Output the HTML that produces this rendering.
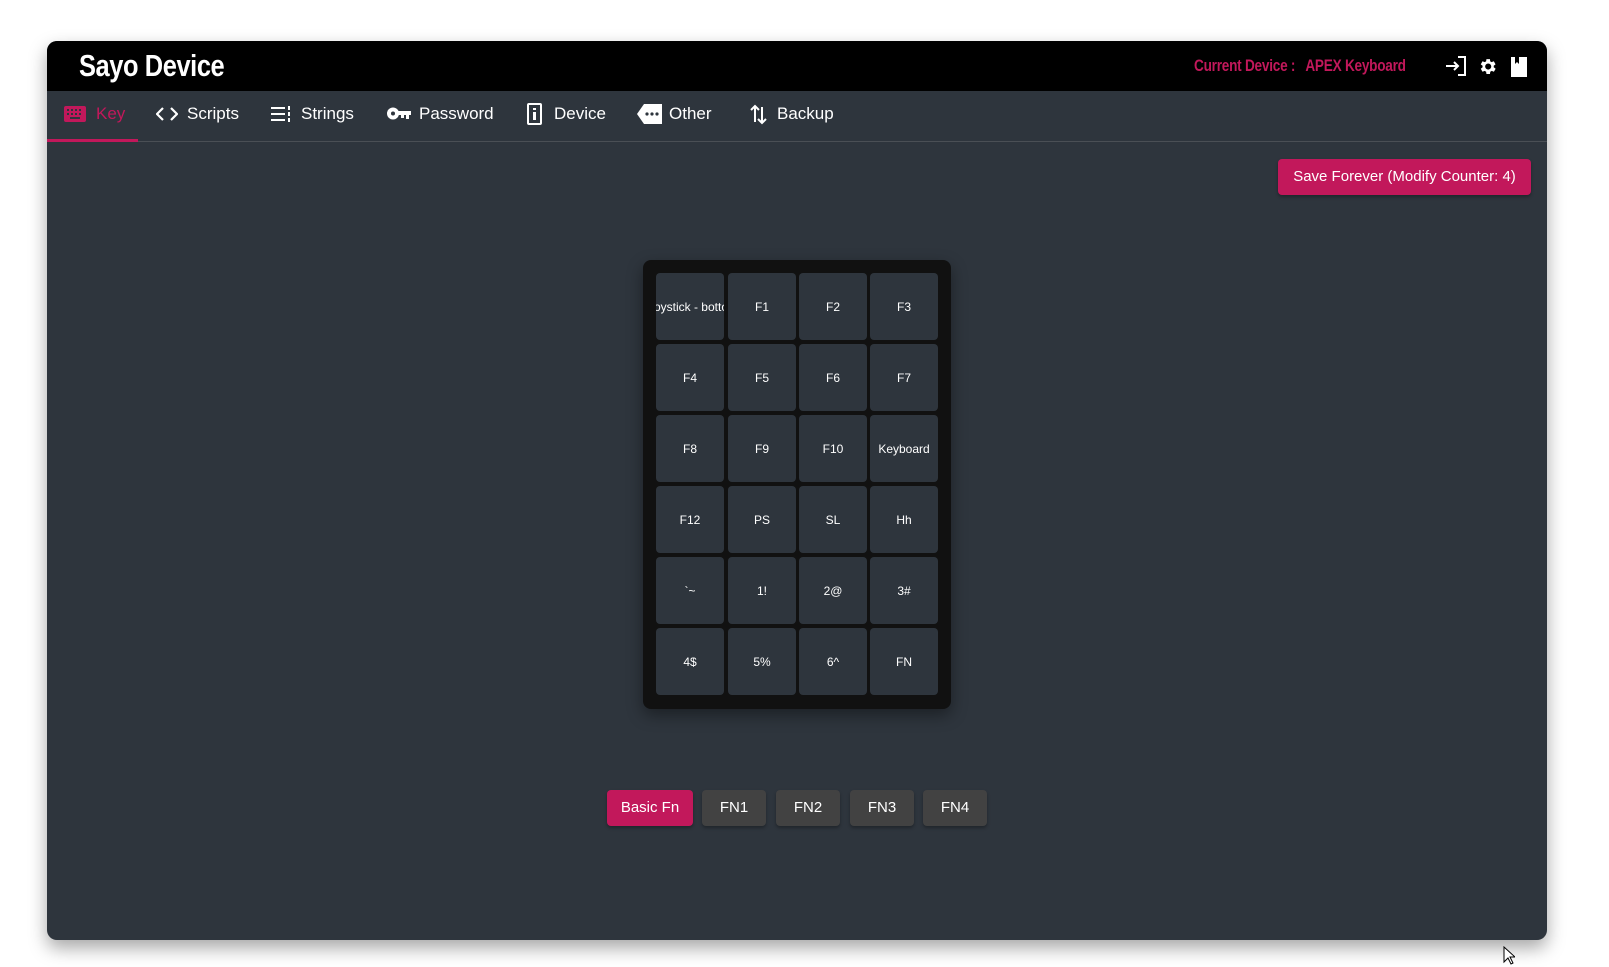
<!DOCTYPE html>
<html><head><meta charset="utf-8"><style>
*{margin:0;padding:0;box-sizing:border-box}
body{width:1609px;height:967px;background:#fff;position:relative;overflow:hidden;font-family:"Liberation Sans",sans-serif}
.card{position:absolute;left:47px;top:41px;width:1500px;height:899px;background:#2e353d;border-radius:10px;overflow:hidden;box-shadow:0 8px 18px rgba(0,0,0,.35)}
.hdr{position:absolute;left:0;top:0;width:100%;height:50px;background:#000}
.logo{position:absolute;left:32px;top:7px;font-weight:bold;font-size:31px;color:#fff;letter-spacing:-0.5px;transform:scaleX(0.82);transform-origin:left;white-space:nowrap}
.cur{position:absolute;left:1147px;top:15px;font-weight:bold;font-size:17px;color:#c2185b;white-space:nowrap;letter-spacing:-0.3px;transform:scaleX(0.8);transform-origin:left}
.nav{position:absolute;left:0;top:50px;width:100%;height:51px;border-bottom:1px solid #4a4f55}
.ni{position:absolute;top:13px;font-size:17px;color:#fff;white-space:nowrap}
.ul{position:absolute;left:0;top:48px;width:91px;height:3px;background:#c2185b}
.ico{position:absolute}
.save{position:absolute;left:1231px;top:118px;width:253px;height:36px;background:#c2185b;border-radius:4px;color:#fff;font-size:15px;line-height:36px;text-align:center;box-shadow:0 2px 3px rgba(0,0,0,.3)}
.kb{position:absolute;left:596px;top:219px;width:308px;height:449px;background:#111;border-radius:8px;box-shadow:0 6px 16px rgba(0,0,0,.4)}
.k{position:absolute;width:68px;height:67px;background:#2e353d;border-radius:4px;color:#fff;font-size:12px;display:flex;align-items:center;justify-content:center;overflow:hidden;white-space:nowrap}
.b{position:absolute;top:749px;height:36px;background:#424242;border-radius:4px;color:#fff;font-size:15px;line-height:36px;text-align:center;box-shadow:0 2px 3px rgba(0,0,0,.3)}
</style></head><body>
<div class="card">
 <div class="hdr">
  <div class="logo">Sayo Device</div>
  <div class="cur">Current Device :&nbsp;&nbsp; APEX Keyboard</div>
  <svg class="ico" style="left:1398px;top:15px" width="22" height="20" viewBox="0 0 22 20"><path d="M1 10h12M9 6l4 4-4 4" stroke="#fff" stroke-width="2" fill="none"/><path d="M13 1h7v18h-7" stroke="#fff" stroke-width="2" fill="none"/></svg>
  <svg class="ico" style="left:1430px;top:15px" width="21" height="21" viewBox="0 0 24 24"><path fill="#fff" d="M19.1 12.9a7 7 0 000-1.8l2.1-1.6-2-3.5-2.5 1a7 7 0 00-1.6-.9L14.8 3.5h-4l-.4 2.6a7 7 0 00-1.6.9l-2.5-1-2 3.5 2.1 1.6a7 7 0 000 1.8l-2.1 1.6 2 3.5 2.5-1a7 7 0 001.6.9l.4 2.6h4l.4-2.6a7 7 0 001.6-.9l2.5 1 2-3.5zM12.8 15.5a3.5 3.5 0 110-7 3.5 3.5 0 010 7z"/></svg>
  <svg class="ico" style="left:1464px;top:16px" width="16" height="20" viewBox="0 0 16 20"><path fill="#fff" d="M0 0h16v20H0z"/><path fill="#000" d="M4 0h4v7L6 5 4 7z"/></svg>
 </div>
 <div class="nav">
  <svg class="ico" style="left:17px;top:15px" width="22" height="16" viewBox="0 0 22 16"><rect width="22" height="16" rx="2" fill="#c2185b"/><g fill="#2e353d"><rect x="3" y="3" width="2" height="2"/><rect x="7" y="3" width="2" height="2"/><rect x="11" y="3" width="2" height="2"/><rect x="15" y="3" width="2" height="2"/><rect x="3" y="7" width="2" height="2"/><rect x="7" y="7" width="2" height="2"/><rect x="11" y="7" width="2" height="2"/><rect x="15" y="7" width="2" height="2"/><rect x="6" y="11" width="10" height="2"/></g></svg>
  <div class="ni" style="left:49px;color:#c2185b">Key</div>
  <svg class="ico" style="left:109px;top:16px" width="22" height="14" viewBox="0 0 22 14"><path d="M7 1L1 7l6 6M15 1l6 6-6 6" stroke="#fff" stroke-width="2.2" fill="none"/></svg>
  <div class="ni" style="left:140px">Scripts</div>
  <svg class="ico" style="left:224px;top:14px" width="20" height="18" viewBox="0 0 20 18"><g fill="#fff"><rect y="2" width="14" height="2"/><rect y="8" width="14" height="2"/><rect y="14" width="14" height="2"/><rect x="17" y="1" width="2" height="4"/><rect x="17" y="7" width="2" height="4"/><rect x="17" y="13" width="2" height="4"/></g></svg>
  <div class="ni" style="left:254px">Strings</div>
  <svg class="ico" style="left:340px;top:16px" width="24" height="13" viewBox="0 0 24 13"><circle cx="6" cy="6.5" r="6" fill="#fff"/><circle cx="6" cy="6.5" r="2" fill="#2e353d"/><path fill="#fff" d="M10 4h14v4h-2v4h-3V8h-2v3h-3V8h-4z"/></svg>
  <div class="ni" style="left:372px">Password</div>
  <svg class="ico" style="left:480px;top:12px" width="15" height="22" viewBox="0 0 15 22"><rect x="1" y="1" width="13" height="20" rx="1" stroke="#fff" stroke-width="2" fill="none"/><rect x="6" y="5" width="3" height="2" fill="#fff"/><rect x="6" y="9" width="3" height="8" fill="#fff"/></svg>
  <div class="ni" style="left:507px">Device</div>
  <svg class="ico" style="left:590px;top:13px" width="25" height="20" viewBox="0 0 25 20"><path fill="#fff" d="M7 0h18v20H7L0 10z"/><g fill="#2e353d"><circle cx="10" cy="10" r="1.6"/><circle cx="15" cy="10" r="1.6"/><circle cx="20" cy="10" r="1.6"/></g></svg>
  <div class="ni" style="left:622px">Other</div>
  <svg class="ico" style="left:703px;top:13px" width="17" height="21" viewBox="0 0 17 21"><path d="M5 18V2M1 6l4-4 4 4M12 3v16M8 15l4 4 4-4" stroke="#fff" stroke-width="2" fill="none"/></svg>
  <div class="ni" style="left:730px">Backup</div>
  <div class="ul"></div>
 </div>
 <div class="save">Save Forever (Modify Counter: 4)</div>
 <div class="kb">
  <div class="k" style="left:13px;top:13px;justify-content:flex-end;padding-right:0"><span style="margin-right:-14px">Joystick - bottom</span></div>
  <div class="k" style="left:85px;top:13px">F1</div>
  <div class="k" style="left:156px;top:13px">F2</div>
  <div class="k" style="left:227px;top:13px">F3</div>
  <div class="k" style="left:13px;top:84px">F4</div>
  <div class="k" style="left:85px;top:84px">F5</div>
  <div class="k" style="left:156px;top:84px">F6</div>
  <div class="k" style="left:227px;top:84px">F7</div>
  <div class="k" style="left:13px;top:155px">F8</div>
  <div class="k" style="left:85px;top:155px">F9</div>
  <div class="k" style="left:156px;top:155px">F10</div>
  <div class="k" style="left:227px;top:155px">Keyboard</div>
  <div class="k" style="left:13px;top:226px">F12</div>
  <div class="k" style="left:85px;top:226px">PS</div>
  <div class="k" style="left:156px;top:226px">SL</div>
  <div class="k" style="left:227px;top:226px">Hh</div>
  <div class="k" style="left:13px;top:297px">`~</div>
  <div class="k" style="left:85px;top:297px">1!</div>
  <div class="k" style="left:156px;top:297px">2@</div>
  <div class="k" style="left:227px;top:297px">3#</div>
  <div class="k" style="left:13px;top:368px">4$</div>
  <div class="k" style="left:85px;top:368px">5%</div>
  <div class="k" style="left:156px;top:368px">6^</div>
  <div class="k" style="left:227px;top:368px">FN</div>
 </div>
 <div class="b" style="left:560px;width:86px;background:#c2185b">Basic Fn</div>
 <div class="b" style="left:655px;width:64px">FN1</div>
 <div class="b" style="left:729px;width:64px">FN2</div>
 <div class="b" style="left:803px;width:64px">FN3</div>
 <div class="b" style="left:876px;width:64px">FN4</div>
</div>
<svg style="position:absolute;left:1503px;top:946px" width="12" height="19" viewBox="0 0 12 19"><path d="M1 1v15l4-4 3 6 2-1-3-6h5z" fill="#fff" stroke="#000" stroke-width="1"/></svg>
</body></html>
